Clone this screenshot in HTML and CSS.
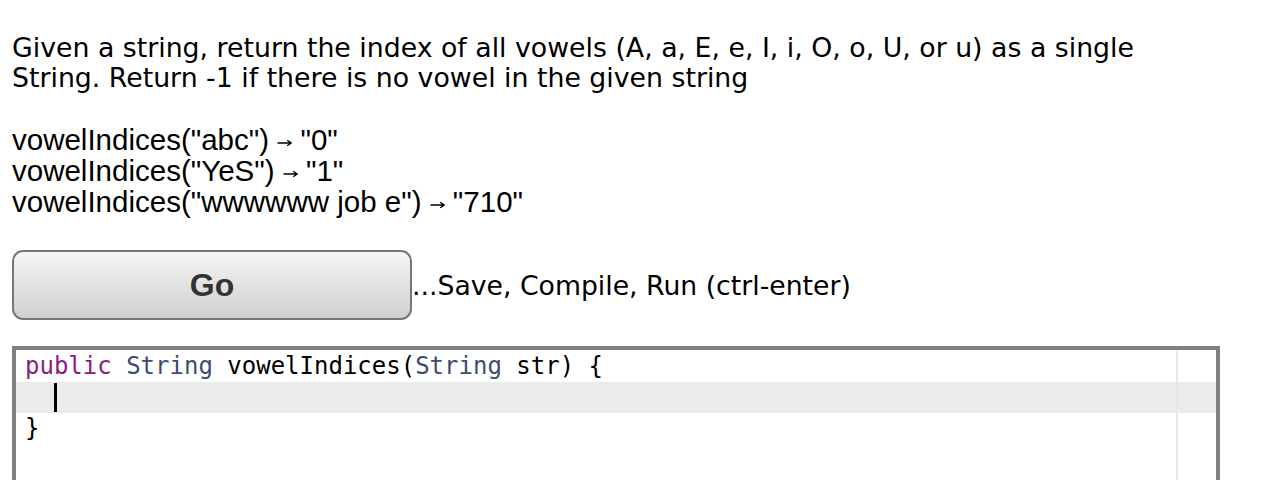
FILE: index.html
```html
<!DOCTYPE html>
<html>
<head>
<meta charset="utf-8">
<link rel="stylesheet" href="styles.css">
</head>
<body>
<div class="page">
  <p class="desc">Given a string, return the index of all vowels (A, a, E, e, I, i, O, o, U, or u) as a single String. Return -1 if there is no vowel in the given string</p>
  <div class="examples">
    <div>vowelIndices("abc") <svg class="arrow" viewBox="0 0 15 10" aria-label="→"><path d="M0.5 5H14M10.2 2.2L14.2 5L10.2 7.8"/></svg> "0"</div>
    <div>vowelIndices("YeS") <svg class="arrow" viewBox="0 0 15 10" aria-label="→"><path d="M0.5 5H14M10.2 2.2L14.2 5L10.2 7.8"/></svg> "1"</div>
    <div>vowelIndices("wwwwww job e") <svg class="arrow" viewBox="0 0 15 10" aria-label="→"><path d="M0.5 5H14M10.2 2.2L14.2 5L10.2 7.8"/></svg> "710"</div>
  </div>
  <div class="run-row">
    <button class="go">Go</button>
    <span class="hint">...Save, Compile, Run (ctrl-enter)</span>
  </div>
  <div class="editor">
    <div class="margin-line"></div>
    <div class="line"><span class="kw">public</span> <span class="ty">String</span> vowelIndices(<span class="ty">String</span> str) {</div>
    <div class="line active">  <span class="cursor"></span></div>
    <div class="line">}</div>
  </div>
</div>
</body>
</html>
```
FILE: styles.css
```css
html, body {
  margin: 0;
  padding: 0;
  background: #fff;
}
.page {
  padding: 33px 12px 0 12px;
  color: #000;
}
.desc {
  margin: 0;
  width: 1200px;
  font-family: "DejaVu Sans", Verdana, sans-serif;
  font-size: 26.75px;
  line-height: 30px;
}
.examples {
  margin-top: 31px;
  font-family: "Liberation Sans", Arial, sans-serif;
  font-size: 29.5px;
  line-height: 31px;
}
.arrow {
  display: inline-block;
  width: 15px;
  height: 10px;
  vertical-align: 2px;
  fill: none;
  stroke: #000;
  stroke-width: 1.4;
}
.run-row {
  margin-top: 33px;
  display: flex;
  align-items: center;
}
.go {
  width: 400px;
  height: 70px;
  border: 2px solid #777;
  border-radius: 11px;
  background: linear-gradient(#f5f5f5, #cfcfcf);
  font-family: "Liberation Sans", Arial, sans-serif;
  font-weight: bold;
  font-size: 32px;
  color: #333;
  padding: 0;
}
.hint {
  font-family: "DejaVu Sans", Verdana, sans-serif;
  font-size: 26.7px;
}
.editor {
  position: relative;
  margin-top: 26px;
  width: 1200px;
  height: 200px;
  border: 4px solid #808080;
  font-family: "DejaVu Sans Mono", Menlo, monospace;
  font-size: 24px;
  line-height: 31px;
  color: #000;
  padding-top: 1px;
}
.line {
  position: relative;
  height: 31px;
  padding-left: 9px;
  white-space: pre;
}
.line.active {
  background: #ebebeb;
}
.kw { color: #891e7e; }
.ty { color: #3c4c72; }
.cursor {
  display: inline-block;
  width: 3px;
  height: 29px;
  background: #000;
  vertical-align: -7px;
}
.margin-line {
  position: absolute;
  left: 1160px;
  top: 0;
  bottom: 0;
  width: 2px;
  background: #e8e8e8;
  z-index: 1;
}
```
